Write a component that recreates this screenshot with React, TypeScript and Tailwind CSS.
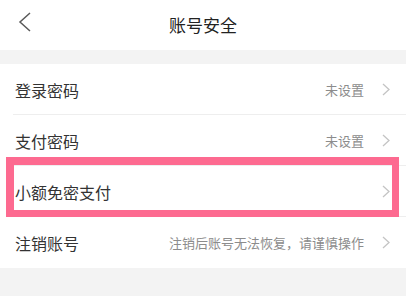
import React from "react";

interface RowProps {
    label: string,
    hint?: string,
    divider?: boolean
}

const Chevron = () => (
    <svg width="8" height="13" viewBox="0 0 8 13" className="shrink-0">
        <path d="M1 1 L7 6.5 L1 12" fill="none" stroke="#c4c4c4" strokeWidth="1.3" />
    </svg>
);

const Row = ({label, hint, divider}: RowProps) => {
    return (
        <div className="relative flex h-[51px] items-center pl-[15px] pr-[16px]">
            <span className="flex-1 text-[16px] text-[#333333]">{label}</span>
            {hint && <span className="mr-[18px] text-[13px] text-[#8c8c8c]">{hint}</span>}
            <Chevron />
            {/* thin line under the row */}
            {divider && <div className="absolute bottom-0 left-[13px] right-0 h-px bg-[#eeeeee]" />}
        </div>
    );
};

export default function App() {
    return (
        <div
            className="relative h-[296px] w-[406px] overflow-hidden bg-[#f3f3f3]"
            style={{ fontFamily: '"Noto Sans CJK SC", "Noto Sans", sans-serif' }}
        >
            {/* HEADER */}
            <div className="relative flex h-[50px] items-center justify-center bg-white">
                <svg width="14" height="20" viewBox="0 0 14 20" className="absolute left-[18px] top-[12px]">
                    <path d="M12 1 L2 10 L12 19" fill="none" stroke="#5a5a5a" strokeWidth="1.5" />
                </svg>
                <span className="text-[17px] text-[#222222]">账号安全</span>
            </div>

            {/* LIST */}
            <div className="relative mt-[14px] bg-white">
                <Row label="登录密码" hint="未设置" divider />
                <Row label="支付密码" hint="未设置" divider />
                <Row label="小额免密支付" divider />
                <Row label="注销账号" hint="注销后账号无法恢复，请谨慎操作" />

                {/* highlight box drawn on top */}
                <div className="pointer-events-none absolute left-[6px] right-[7px] top-[93px] h-[60px] border-[7px] border-l-[8px] border-t-[8px] border-[#fd6a90]" />
            </div>
        </div>
    );
}
